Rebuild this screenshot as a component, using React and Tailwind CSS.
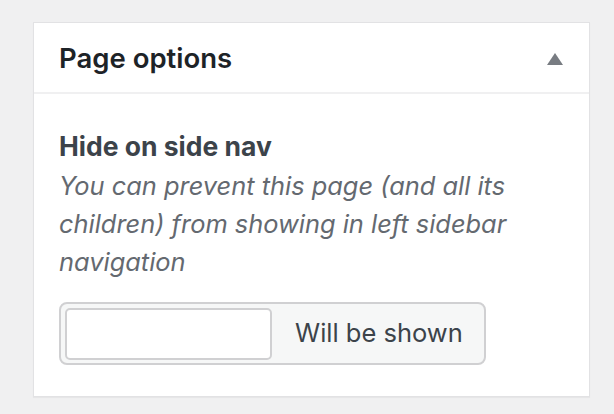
import React from 'react';

const PageOptions = () => {
  return (
    <div className="min-h-[414px] bg-[#f0f0f1] pt-[22px] pl-[33px] font-['Inter',sans-serif]">
      <div className="w-[557px] bg-white border border-[#e2e2e4] shadow-[0_1px_1px_rgba(0,0,0,0.04)]">
        {/* header */}
        <div className="h-[71px] flex items-center justify-between pl-[25px] pr-[26px] pt-[3px] border-b-2 border-[#f0f0f1]">
          <h2 className="text-[27.5px] font-semibold text-[#1d2327] leading-none">Page options</h2>
          <svg width="16" height="12" viewBox="0 0 16 12" className="text-[#787c82]">
            <polygon points="8,0 16,12 0,12" fill="currentColor" />
          </svg>
        </div>

        {/* body */}
        <div className="pl-[25px] pr-[24px] pt-[33px] pb-[31px]">
          <div className="text-[26.5px] font-bold text-[#3c434a] leading-[38px]">Hide on side nav</div>
          <p className="mt-[2px] text-[25.4px] italic text-[#646970] leading-[38px] w-[470px]">
            You can prevent this page (and all its children) from showing in left sidebar navigation
          </p>
          <div className="mt-[21px] flex items-center w-[427px] h-[63px] rounded-[8px] border-2 border-[#d0d0d2] bg-[#f6f7f7] pl-[4px]">
            <div className="w-[207px] h-[52px] rounded-[5px] border-2 border-[#d0d0d2] bg-white"></div>
            <span className="ml-[23px] text-[25.5px] text-[#3c434a]">Will be shown</span>
          </div>
        </div>
      </div>
    </div>
  );
};

export default PageOptions;
